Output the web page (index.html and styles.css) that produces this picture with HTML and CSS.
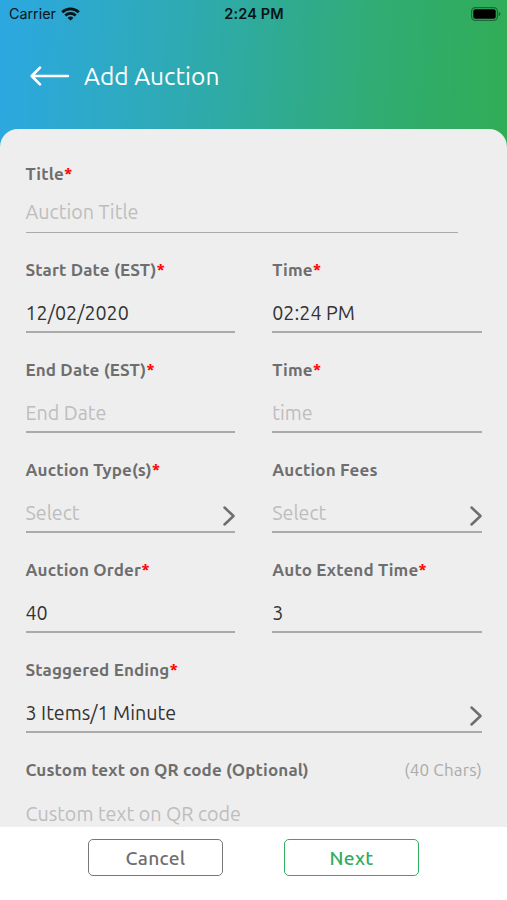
FILE: index.html
```html
<!DOCTYPE html>
<html lang="en">
<head>
<meta charset="utf-8">
<title>Add Auction</title>
<link rel="stylesheet" href="styles.css">
</head>
<body>
<div class="app">
  <div class="status">
    <div class="carrier"><span>Carrier</span>
      <svg width="19" height="14" viewBox="0 0 19 14" fill="none" stroke="#081418" stroke-width="2.7"><path d="M1.2 5.2a12 12 0 0 1 16.6 0M4.3 8.5a7.6 7.6 0 0 1 10.4 0"/><path d="M9.5 13.6 6.6 10.9a4.2 4.2 0 0 1 5.8 0z" fill="#081418" stroke="none"/></svg>
    </div>
    <div class="clock">2:24 PM</div>
    <svg class="battery" width="30" height="14" viewBox="0 0 30 14"><rect x=".6" y=".6" width="25.8" height="12.8" rx="3.6" fill="none" stroke="#000" stroke-opacity=".4" stroke-width="1.2"/><rect x="2.3" y="2.3" width="22.4" height="9.4" rx="2" fill="#000"/><path d="M27.7 4.8c2.3.8 2.3 3.6 0 4.4z" fill="#000" fill-opacity=".4"/></svg>
  </div>
  <header class="header">
    <svg width="40" height="20" viewBox="0 0 40 20" fill="none" stroke="#fff" stroke-width="2.6" stroke-linecap="round" stroke-linejoin="round"><path d="M38 10H2M10 1.7 1.7 10l8.3 8.3"/></svg>
    <h1>Add Auction</h1>
  </header>
  <main class="sheet">
    <div class="field title-field"><label>Title<i>*</i></label><div class="value empty">Auction Title</div></div>
    <div class="row">
      <div class="field"><label>Start Date (EST)<i>*</i></label><div class="value">12/02/2020</div></div>
      <div class="field"><label>Time<i>*</i></label><div class="value">02:24 PM</div></div>
    </div>
    <div class="row">
      <div class="field"><label>End Date (EST)<i>*</i></label><div class="value empty">End Date</div></div>
      <div class="field"><label>Time<i>*</i></label><div class="value empty">time</div></div>
    </div>
    <div class="row">
      <div class="field"><label>Auction Type(s)<i>*</i></label><div class="value empty">Select<svg class="chev" viewBox="0 0 12 20"><path d="M1.5 1.5 10.500 10l-9 8.500"/></svg></div></div>
      <div class="field"><label>Auction Fees</label><div class="value empty">Select<svg class="chev" viewBox="0 0 12 20"><path d="M1.5 1.5 10.500 10l-9 8.500"/></svg></div></div>
    </div>
    <div class="row">
      <div class="field"><label>Auction Order<i>*</i></label><div class="value">40</div></div>
      <div class="field"><label>Auto Extend Time<i>*</i></label><div class="value">3</div></div>
    </div>
    <div class="row">
      <div class="field"><label>Staggered Ending<i>*</i></label><div class="value">3 Items/1 Minute<svg class="chev" viewBox="0 0 12 20"><path d="M1.5 1.5 10.500 10l-9 8.500"/></svg></div></div>
    </div>
    <div class="row">
      <div class="field"><label>Custom text on QR code (Optional)<small>(40 Chars)</small></label><div class="value empty">Custom text on QR code</div></div>
    </div>
  </main>
  <footer class="footer">
    <button class="btn cancel">Cancel</button>
    <button class="btn next">Next</button>
  </footer>
</div>
</body>
</html>
```
FILE: styles.css
```css
* { box-sizing: border-box; }
body { margin: 0; font-family: Ubuntu, "Noto Sans", sans-serif; }
.app { width: 507px; height: 900px; display: flex; flex-direction: column; overflow: hidden;
  background: linear-gradient(94deg, #2ca8e2 0%, #2eaab4 35%, #2fab96 53%, #31ac76 72%, #30ad55 100%) 0 0 / 100% 160px no-repeat, #fff; }
.status { height: 28px; display: grid; grid-template-columns: 1fr auto 1fr; align-items: center; padding: 0 6px 1px 9px; font: 14.3px Inter, sans-serif; color: #081418; }
.carrier { display: flex; align-items: center; gap: 5px; }
.clock { font-weight: 600; font-size: 14.5px; letter-spacing: .15px; margin-right: 2px; }
.battery { justify-self: end; }
.header { height: 101px; padding: 0 0 5px 29.5px; display: flex; align-items: center; gap: 14.5px; }
h1 { margin: 0; font-size: 24.5px; font-weight: 400; color: #fff; }
.sheet { height: 698px; flex: none; overflow: hidden; background: #eee; border-radius: 18px 18px 0 0; padding: 0 25px 0 25.5px; }
.row { display: grid; grid-auto-flow: column; grid-auto-columns: 1fr; gap: 37px; }
.field { height: 100.1px; padding: 27px 0 7px; border-bottom: 2px solid #aaa; display: flex; flex-direction: column; justify-content: space-between; }
.title-field { height: 104px; margin-right: 24px; padding: 35px 0 9.500px; border-bottom-width: 1px; }
label { display: flex; line-height: 20px; font-size: 17px; letter-spacing: .15px; font-weight: 600; color: #6e6e6e; white-space: nowrap; }
i { font-style: normal; color: #f00; font-weight: 700; }
small { margin-left: auto; font-size: 17px; font-weight: 400; color: #aaa; }
.value { height: 22px; display: flex; justify-content: space-between; line-height: 22px; font-size: 19.7px; color: #333; white-space: nowrap; }
.empty { color: #bdbdbd; }
.chev { flex: none; width: 12px; height: 20px; margin-top: 3.5px; fill: none; stroke: #6e6e6e; stroke-width: 2.5; stroke-linecap: round; stroke-linejoin: round; }
.footer { flex: 1; display: flex; justify-content: center; gap: 61px; padding-top: 12px; background: #fff; }
.btn { width: 135px; height: 37px; padding: 0; border-radius: 5px; background: #fff; font: 500 19.2px Ubuntu, "Noto Sans", sans-serif; letter-spacing: .3px; }
.cancel { border: 1px solid #777; color: #6e6e6e; }
.next { border: 1px solid #30ad5c; color: #30ad5c; }
```
